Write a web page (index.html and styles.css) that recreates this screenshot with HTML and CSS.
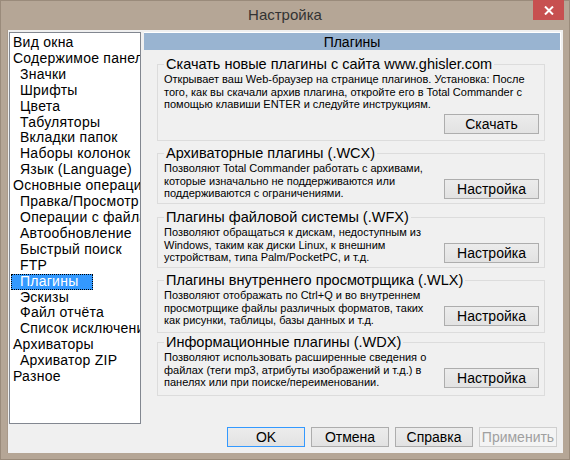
FILE: index.html
```html
<!DOCTYPE html>
<html lang="ru">
<head>
  <meta charset="UTF-8" />
  <title>Настройка</title>
  <link rel="stylesheet" href="styles.css">
</head>
<body>
  <div class="window">
    <div class="titlebar">
      <div class="title">Настройка</div>
      <button class="close" title="Закрыть">
        <svg width="10" height="9" viewBox="0 0 10 9"><path d="M1 0.5 L9 8.5 M9 0.5 L1 8.5" stroke="#fff" stroke-width="2"/></svg>
      </button>
    </div>

    <div class="client">
      <div class="main">
        <ul class="tree">
          <li><span>Вид окна</span></li>
          <li><span>Содержимое панелей</span></li>
          <li class="child"><span>Значки</span></li>
          <li class="child"><span>Шрифты</span></li>
          <li class="child"><span>Цвета</span></li>
          <li class="child"><span>Табуляторы</span></li>
          <li class="child"><span>Вкладки папок</span></li>
          <li class="child"><span>Наборы колонок</span></li>
          <li class="child"><span>Язык (Language)</span></li>
          <li><span>Основные операции</span></li>
          <li class="child"><span>Правка/Просмотр</span></li>
          <li class="child"><span>Операции с файлами</span></li>
          <li class="child"><span>Автообновление</span></li>
          <li class="child"><span>Быстрый поиск</span></li>
          <li class="child"><span>FTP</span></li>
          <li class="child selected"><span>Плагины</span></li>
          <li class="child"><span>Эскизы</span></li>
          <li class="child"><span>Файл отчёта</span></li>
          <li class="child"><span>Список исключений</span></li>
          <li><span>Архиваторы</span></li>
          <li class="child"><span>Архиватор ZIP</span></li>
          <li><span>Разное</span></li>
        </ul>

        <div class="panel">
          <div class="panel-header">Плагины</div>

          <fieldset class="group g-download">
            <legend>Скачать новые плагины с сайта www.ghisler.com</legend>
            <p class="desc">Открывает ваш Web-браузер на странице плагинов. Установка: После<br>того, как вы скачали архив плагина, откройте его в Total Commander с<br>помощью клавиши ENTER и следуйте инструкциям.</p>
            <div class="right"><button class="btn">Скачать</button></div>
          </fieldset>

          <fieldset class="group g-wcx">
            <legend>Архиваторные плагины (.WCX)</legend>
            <div class="group-body">
              <p class="desc">Позволяют Total Commander работать с архивами,<br>которые изначально не поддерживаются или<br>поддерживаются с ограничениями.</p>
              <button class="btn">Настройка</button>
            </div>
          </fieldset>

          <fieldset class="group g-wfx">
            <legend>Плагины файловой системы (.WFX)</legend>
            <div class="group-body">
              <p class="desc">Позволяют обращаться к дискам, недоступным из<br>Windows, таким как диски Linux, к внешним<br>устройствам, типа Palm/PocketPC, и т.д.</p>
              <button class="btn">Настройка</button>
            </div>
          </fieldset>

          <fieldset class="group g-wlx">
            <legend>Плагины внутреннего просмотрщика (.WLX)</legend>
            <div class="group-body">
              <p class="desc">Позволяют отображать по Ctrl+Q и во внутреннем<br>просмотрщике файлы различных форматов, таких<br>как рисунки, таблицы, базы данных и т.д.</p>
              <button class="btn">Настройка</button>
            </div>
          </fieldset>

          <fieldset class="group g-wdx">
            <legend>Информационные плагины (.WDX)</legend>
            <div class="group-body">
              <p class="desc">Позволяют использовать расширенные сведения о<br>файлах (теги mp3, атрибуты изображений и т.д.) в<br>панелях или при поиске/переименовании.</p>
              <button class="btn">Настройка</button>
            </div>
          </fieldset>
        </div>
      </div>

      <div class="footer">
        <button class="btn dlg default">OK</button>
        <button class="btn dlg">Отмена</button>
        <button class="btn dlg">Справка</button>
        <button class="btn dlg" disabled>Применить</button>
      </div>
    </div>
  </div>
</body>
</html>
```

FILE: styles.css
```css
body {
  margin: 0;
  font-family: "Liberation Sans", Arial, sans-serif;
  color: #000;
}
.window {
  width: 570px;
  height: 460px;
  box-sizing: border-box;
  background: #b5a696;
  border: 1px solid #9a8b7b;
  display: flex;
  flex-direction: column;
}
.titlebar {
  height: 29px;
  display: flex;
}
.title {
  flex: 1;
  text-align: center;
  font-size: 15px;
  line-height: 28px;
  color: #333;
  padding-left: 36px;
}
.close {
  width: 31px;
  height: 20px;
  margin: -1px 5px 0 0;
  border: none;
  padding: 0;
  background: #c75050;
  display: flex;
  align-items: center;
  justify-content: center;
}
/* Client area */
.client {
  margin: 0 6px;
  height: 423px;
  background: #f0f0f0;
  border-left: 1px solid #a8998a;
  display: flex;
  flex-direction: column;
}
.main {
  display: flex;
  padding-top: 2px;
}
.tree {
  list-style: none;
  margin: 0 0 0 1px;
  padding: 2px 0 0 0;
  width: 132px;
  height: 392px;
  box-sizing: border-box;
  background: #fff;
  border: 1px solid #828790;
  overflow: hidden;
  white-space: nowrap;
  font-size: 14px;
  letter-spacing: 0.25px;
  line-height: 15.9px;
}
.tree li span {
  display: inline-block;
  margin-left: 1px;
  padding: 0 2px;
}
.tree li.child span {
  padding-left: 9px;
}
.tree li.selected span {
  padding-right: 14px;
  background: #3399ff;
  color: #fff;
  outline: 1px dotted #000;
  outline-offset: -1px;
}
/* Right panel */
.panel {
  margin-left: 3px;
  width: 417px;
}
.panel-header {
  height: 17px;
  background: #99b4d1;
  border-top: 1px solid #fff;
  border-right: 1px solid #fff;
  text-align: center;
  font-size: 14px;
  line-height: 18px;
}
.group {
  margin: 3px 16px 0 13px;
  padding: 0 5px 0 6px;
  border: 1px solid #dcdcdc;
  box-sizing: border-box;
  min-width: 0;
}
.group legend {
  padding: 0 2px;
  font-size: 14.5px;
  line-height: 18px;
}
.g-download { height: 86px; margin-top: 5px; }
.g-wcx { height: 60px; margin-top: 3px; }
.g-wfx { height: 60px; margin-top: 4px; }
.g-wlx { height: 62px; margin-top: 3px; }
.g-wdx { height: 63px; margin-top: 0; }
.desc {
  margin: 0;
  font-size: 11px;
  line-height: 12.5px;
  white-space: nowrap;
}
.right {
  display: flex;
  justify-content: flex-end;
  margin-top: 3px;
}
.group-body {
  display: flex;
  align-items: flex-end;
  justify-content: space-between;
}
.group-body .btn {
  margin-bottom: 1px;
}
.btn {
  width: 95px;
  height: 20px;
  padding: 0;
  font-family: "Liberation Sans", Arial, sans-serif;
  font-size: 14px;
  color: #000;
  background: linear-gradient(#ececec, #e2e2e2);
  border: 1px solid #adadad;
}
/* Dialog buttons */
.footer {
  display: flex;
  justify-content: flex-end;
  gap: 6px;
  padding: 3px 6px 0 0;
}
.btn.dlg {
  width: 78px;
}
.btn.default {
  border-color: #3399ff;
}
.btn:disabled {
  color: #a0a0a0;
  background: #f4f4f4;
  border-color: #cfcfcf;
}
```
